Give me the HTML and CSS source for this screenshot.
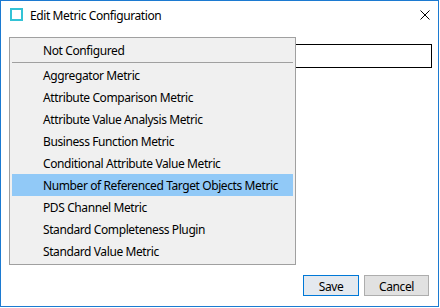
FILE: index.html
```html
<!DOCTYPE html>
<html lang="en">
<head>
  <meta charset="UTF-8">
  <title>Edit Metric Configuration</title>
  <link rel="stylesheet" href="styles.css">
</head>
<body>

  <div class="window">
    <div class="titlebar">
      <span class="app-icon"></span>
      <span class="title">Edit Metric Configuration</span>
      <svg class="close" width="10" height="10" viewBox="0 0 10 10">
        <path d="M0.5 0.5 L9.5 9.5 M9.5 0.5 L0.5 9.5" stroke="#000" stroke-width="1" fill="none"/>
      </svg>
    </div>

    <div class="content">
      <div class="field-row">
        <div class="field"></div>
      </div>
      <div class="actions">
        <button class="btn btn-default">Save</button>
        <button class="btn">Cancel</button>
      </div>
    </div>

    <!-- open combo box list -->
    <ul class="dropdown">
      <li class="item">Not Configured</li>
      <li class="separator"></li>
      <li class="item">Aggregator Metric</li>
      <li class="item">Attribute Comparison Metric</li>
      <li class="item">Attribute Value Analysis Metric</li>
      <li class="item">Business Function Metric</li>
      <li class="item">Conditional Attribute Value Metric</li>
      <li class="item selected">Number of Referenced Target Objects Metric</li>
      <li class="item">PDS Channel Metric</li>
      <li class="item">Standard Completeness Plugin</li>
      <li class="item">Standard Value Metric</li>
    </ul>
  </div>

</body>
</html>
```

FILE: styles.css
```css
body {
  margin: 0;
  background: #fff;
  font-family: "Noto Sans", "Open Sans", sans-serif;
  font-size: 12px;
  letter-spacing: -0.4px;
  color: #000;
}

.window {
  position: relative;
  box-sizing: border-box;
  width: 439px;
  height: 307px;
  border: 1px solid #1c7ad1;
  background: #fff;
  display: flex;
  flex-direction: column;
}

.titlebar {
  height: 27px;
  display: flex;
  align-items: center;
  padding: 0 8px 0 9px;
}
.app-icon {
  width: 13px;
  height: 13px;
  box-sizing: border-box;
  border: 2px solid #33c3d6;
}
.title {
  margin-left: 7px;
  padding-top: 2px;
}
.close {
  margin-left: auto;
}

.content {
  flex: 1;
  display: flex;
  flex-direction: column;
  padding: 16px 6px 10px 0;
}
.field-row {
  display: flex;
  justify-content: flex-end;
}
.field {
  width: 330px;
  height: 24px;
  box-sizing: border-box;
  border: 1px solid #000;
  background: #fff;
}

.actions {
  margin-top: auto;
  margin-right: 3px;
  display: flex;
  justify-content: flex-end;
  gap: 5px;
}
.btn {
  height: 21px;
  box-sizing: border-box;
  padding: 1px 0 0;
  font-family: inherit;
  font-size: 12px;
  letter-spacing: -0.4px;
  color: #000;
  background: #e1e1e1;
  border: 1px solid #adadad;
  width: 65px;
}
.btn-default {
  width: 56px;
  background: #e4e9ef;
  border-color: #0078d7;
}

.dropdown {
  position: absolute;
  left: 8px;
  top: 36px;
  width: 287px;
  box-sizing: border-box;
  margin: 0;
  padding: 1px 2px 2px;
  list-style: none;
  background: #f0f0f0;
  border: 1px solid #a0a0a0;
}
.item {
  height: 22px;
  line-height: 24px;
  padding-left: 31px;
  white-space: nowrap;
}
.item.selected {
  background: #91c9f7;
}
.separator {
  height: 1px;
  margin: 1px 0;
  background: #a0a0a0;
}
```
